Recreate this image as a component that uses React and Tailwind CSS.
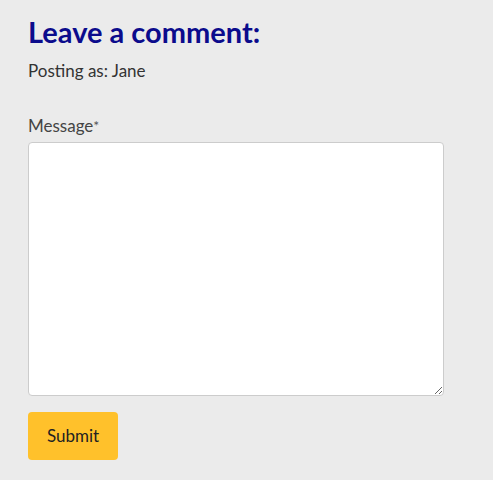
export default function App() {
  return (
    <div className="min-h-screen bg-[#ebebeb] px-[28px] pt-[14px] font-['Lato','Liberation_Sans',sans-serif]">
      <h2 className="text-[29px] leading-[36px] font-bold text-[#0b0b8c]">Leave a comment:</h2>
      <p className="mt-[10px] text-[17px] leading-[22px] text-[#333]">Posting as: Jane</p>

      <form className="mt-[33px]" onSubmit={(e) => e.preventDefault()}>
        <label className="block text-[17px] leading-[22px] text-[#444]">
          Message<span className="align-top text-[14px] text-[#555]">*</span>
        </label>
        <textarea className="mt-[5px] block h-[254px] w-[416px] rounded-[4px] border border-[#ccc] bg-white" />
        <button
          type="submit"
          className="mt-[16px] h-[48px] w-[90px] rounded-[4px] bg-[#ffc12b] text-[17px] text-[#222]"
        >
          Submit
        </button>
      </form>
    </div>
  )
}
